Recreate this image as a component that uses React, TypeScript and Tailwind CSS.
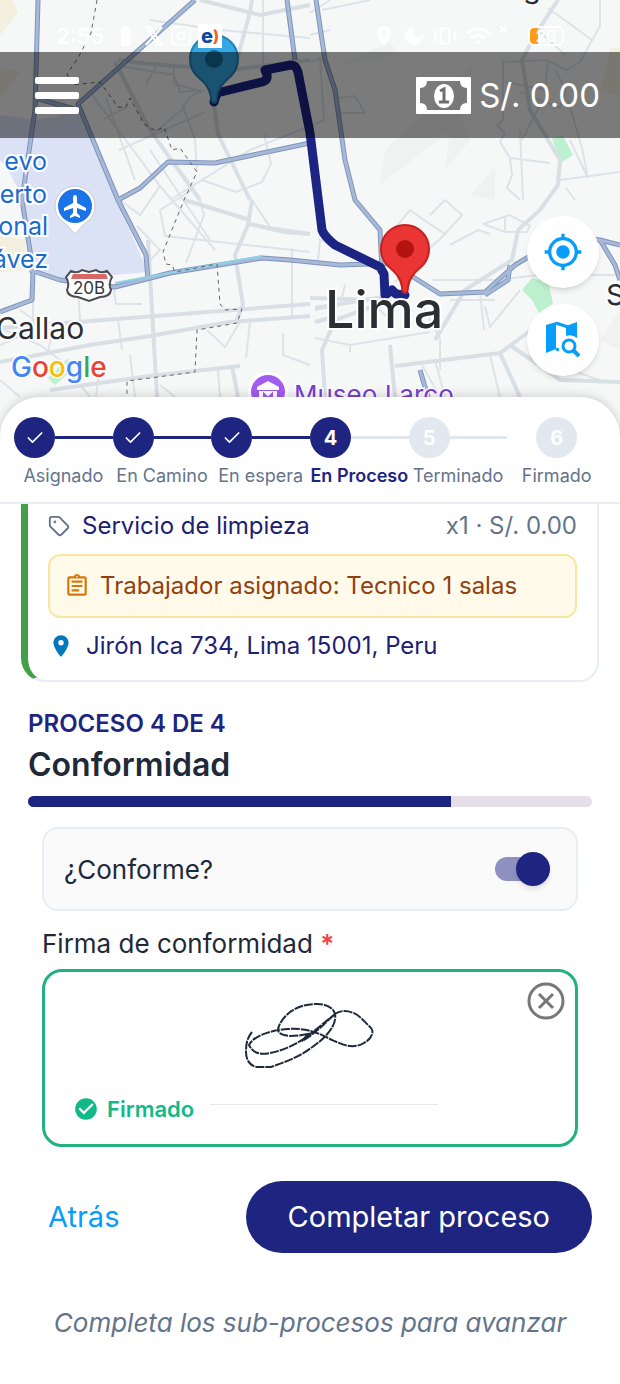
import React, { useState } from "react";
import { Check, Instagram, Tag, Vibrate } from "lucide-react";
import {
  MdBatteryFull,
  MdCheckCircle,
  MdDarkMode,
  MdLocationOn,
  MdMyLocation,
  MdOutlineAssignment,
  MdWifi,
} from "react-icons/md";

type StepState = "done" | "current" | "pending";

interface Step {
  label: string;
  state: StepState;
}

const steps: Step[] = [
  { label: "Asignado", state: "done" },
  { label: "En Camino", state: "done" },
  { label: "En espera", state: "done" },
  { label: "En Proceso", state: "current" },
  { label: "Terminado", state: "pending" },
  { label: "Firmado", state: "pending" },
];

const process = { current: 4, total: 4, name: "Conformidad", progress: 75 };

const thinRoads = [
  "M90 92 L160 186 L215 250 M106 98 L135 180 M119 150 L205 112 M104 119 L127 107 M120 66 L174 75 L180 92 L200 90 M146 84 L156 66",
  "M174 67 V84 L202 91 Q186 96 184 108 L155 132 M182 104 L195 140 L197 172 M263 0 V68 M202 180 L236 192 L262 182 L271 164 L264 134",
  "M150 150 L210 240 M160 186 L140 215 L120 200 M170 200 L250 150 L310 126 M195 188 L160 210 L165 236 L310 252",
  "M200 200 L204 215 L186 263 M137 226 L160 250 L148 263 M113 285 L116 304 L142 304 M78 290 L80 320 M33 300 V330 L0 345",
  "M150 20 L220 30 L310 38 M245 190 L270 227 L310 233 M292 248 V316 M310 365 L283 355 V333 M207 330 L225 347 L240 322 M250 322 L246 358 M118 320 L122 350 M0 328 L40 345 L60 360 L90 397",
  "M310 13 L330 0 M322 10 L370 0 M310 35 L330 30 M310 62 L320 58 L324 120 L310 127 M338 98 L355 96 L365 113 L338 113",
  "M505 62 L547 60 L566 70 L580 62 L600 26 V0 M548 8 L592 40 M503 60 V120 L497 125 L505 133 L500 142 L510 158 L512 175 L507 188 L520 200 M505 82 L545 90 L548 62",
  "M520 92 L560 108 L566 90 L555 70 M510 158 L550 163 M520 130 L523 200 M568 100 L582 148 L588 178 L570 140 M540 105 L522 140 M560 180 L620 172 M566 188 L575 200 M538 30 L565 55",
  "M430 215 L445 200 L462 215 L445 234 L424 220 L410 210 L392 232 M445 234 L395 282 M450 245 L478 230 L490 234 M483 224 L510 215 L530 226 L527 232 L505 232 L483 224 M505 216 V232 M432 280 L495 280 L540 275 L620 275",
  "M315 338 L350 345 L430 332 M350 345 V352 M315 310 L340 305 L345 285 M370 300 L395 325 M440 370 V339 L420 300 M485 306 L490 327 L520 290 M480 292 L484 330 M450 300 L495 300 M422 365 L440 397 M490 355 L500 397 M540 360 L600 380",
  "M130 355 L135 397 M160 385 L175 397 M218 370 L220 397 M100 362 L96 397 M20 310 L52 332 L48 352 M318 260 L320 240 L333 245 M0 380 L20 397 M435 360 L445 397",
];

const mediumRoads = [
  "M118 60 L150 64 L230 70 L310 60",
  "M115 62 L150 130 L200 200",
  "M214 104 L218 134 L250 200",
  "M148 240 L157 397",
  "M0 328 L310 304 M0 362 L90 345 L150 336 L230 322 L310 316 M50 390 L150 376 L240 366",
  "M252 0 L250 12 L237 60 M200 0 L260 15 L310 5",
  "M252 200 L248 225 L235 255 L243 305 L236 322 M232 366 L238 397",
  "M250 224 L285 232 L310 234 M185 200 L250 220",
  "M558 0 L535 35 L522 60 L530 110 L560 160 L558 185 L540 210 L518 230 L512 260 L465 290 L435 340",
  "M390 345 L395 397 M315 308 L395 295 M310 298 L380 300 M315 322 L330 318 M325 397 L322 350 L335 320 L390 300",
  "M395 366 L500 353 L545 320 M500 353 L520 397 M510 345 L560 380 L620 382",
];

const highways = [
  "M38 0 L35 110 L22 200 L33 270 L32 300 L0 312",
  "M195 0 L78 104 L118 200 L146 255 L148 280",
  "M35 98 L78 110 M118 200 L140 188 L168 162 L215 163 L310 143",
  "M30 270 L60 280 L115 287 L170 273 L262 258 L290 260 L340 265 L400 263",
  "M287 0 L295 60 M316 0 L325 60 L335 90 L345 160 L355 200 L380 230 L382 270",
  "M410 275 L440 294 L485 292 L515 265 L540 250 L560 235 L600 240 L620 245 M600 240 L615 265 L620 280 M485 295 L508 280 L510 265",
  "M420 370 L428 397",
];

function MapPin({ x, y, color, dot, edge }: { x: number; y: number; color: string; dot: string; edge: string }) {
  return (
    <g transform={`translate(${x} ${y})`}>
      <path
        d="M0 44C-2 44-3 42-3 38C-4 29-10 23-17 17A24 24 0 1 1 17 17C10 23 4 29 3 38C3 42 2 44 0 44Z"
        fill={color}
        stroke={edge}
        strokeWidth="2"
      />
      <circle r="9" fill={dot} />
    </g>
  );
}

function CityMap() {
  return (
    <svg
      className="absolute inset-0 h-full w-full"
      viewBox="0 0 620 440"
      preserveAspectRatio="xMidYMin slice"
      fontFamily="Inter, sans-serif"
      aria-hidden="true"
    >
      <rect width="620" height="440" fill="#f6f7f7" />
      <path d="M0 0 H12 L18 12 L0 35 Z M50 102 L70 132 L80 128 L60 95 Z M0 235 L25 240 L28 270 L0 272 Z" fill="#f3efdf" />
      <path d="M0 68 L20 72 L0 98 Z M610 48 H620 V95 L600 92 Z" fill="#f3efdf" />
      <path d="M0 115 L36 120 L78 112 L148 272 L60 280 L30 268 L24 200 L8 170 L0 160 Z" fill="#dbe2f6" />
      <path d="M385 150 L450 90 L475 60 L460 115 L470 140 L445 170 L450 130 L380 185 Z M470 195 L495 168 V200 Z M340 65 L390 42 L400 55 Z M600 340 L620 310 V350 Z" fill="#f0f1f1" />
      <path d="M552 138 L563 136 L573 155 L560 163 Z M522 290 L532 278 L548 282 L553 303 L540 315 L532 300 Z M48 378 L68 358 L70 372 L55 385 Z" fill="#bdf0cf" />

      <g fill="none">
        {thinRoads.map((d) => (
          <path key={d} d={d} stroke="#dde3e9" strokeWidth="2" />
        ))}
        {mediumRoads.map((d) => (
          <path key={d} d={d} stroke="#d8dfe5" strokeWidth="4" />
        ))}
      </g>
      <g fill="none" strokeLinejoin="round">
        {highways.map((d) => (
          <path key={d} d={d} stroke="#8194bb" strokeWidth="5" />
        ))}
        {highways.map((d) => (
          <path key={d} d={d} stroke="#a6b9d9" strokeWidth="3" />
        ))}
        <path d="M115 283 L262 256" stroke="#8cd3e6" strokeWidth="2" />
        <path
          d="M97 0 L91 33 L78 58 L67 74 L72 85 L100 82 L118 107 L126 107 L130 98 L144 124 L156 131 L164 127 L172 150 L180 148 L197 172 L184 200 L163 252 L166 264 L172 265 L175 272 L217 264 L220 304 L225 310 L242 309 L237 323 L197 330 L195 372 L127 381 V397"
          stroke="#62676d"
          strokeDasharray="4 4"
        />
      </g>

      <path
        d="M214 102 L217 93 L262 82 Q268 80 267 75 L265 70 L291 65 Q296 65 298 72 L310 133 L322 230 Q324 236 335 245 L380 267 L384 274 L385 295 L392 290 L396 294 L405 295"
        fill="none"
        stroke="#1c2484"
        strokeWidth="9"
        strokeLinejoin="round"
        strokeLinecap="round"
      />

      <g fill="#1a6bd0" stroke="#fff" strokeWidth="4" paintOrder="stroke" fontSize="25" textAnchor="end">
        <text x="47" y="170">evo</text>
        <text x="47" y="203">erto</text>
        <text x="48" y="235">onal</text>
        <text x="48" y="268">ávez</text>
      </g>
      <path d="M75 234 L66 224 A20 20 0 1 1 84 224 Z" fill="#fff" stroke="#c9ccd2" />
      <circle cx="75" cy="206" r="17" fill="#1a73e8" />
      <path d="M75 195 Q77 195 77 198 V203 L86 208 V211 L77 208 V213 L80 216 V218 L75 216 L70 218 V216 L73 213 V208 L64 211 V208 L73 203 V198 Q73 195 75 195 Z" fill="#fff" />

      <path
        d="M71 271 Q77 274 82 270 L89 272 L96 270 Q101 274 107 271 L112 277 Q108 284 111 290 Q110 297 100 297 L89 301 L78 297 Q68 297 67 290 Q70 284 66 277 Z"
        fill="#fff"
        stroke="#4a4d51"
        strokeWidth="2"
      />
      <path d="M73 274 L106 274 L108 279 H71 Z" fill="#d86767" />
      <text x="89" y="294" fontSize="17" textAnchor="middle" fill="#33373c">20B</text>

      <g fill="#2b2e33" stroke="#fff" strokeWidth="4" paintOrder="stroke" strokeLinejoin="round">
        <text x="-4" y="339" fontSize="30">Callao</text>
        <text x="325" y="328" fontSize="52" fontWeight="500">Lima</text>
        <text x="606" y="305" fontSize="29">S</text>
        <text x="523" y="-2" fontSize="29">g</text>
      </g>
      <text x="11" y="377" fontSize="28" fontWeight="500" stroke="#fff" strokeWidth="3" paintOrder="stroke">
        <tspan fill="#4285f4">G</tspan>
        <tspan fill="#ea4335">o</tspan>
        <tspan fill="#fbbc05">o</tspan>
        <tspan fill="#4285f4">g</tspan>
        <tspan fill="#34a853">l</tspan>
        <tspan fill="#ea4335">e</tspan>
      </text>

      <circle cx="268" cy="392" r="20" fill="#fff" />
      <circle cx="268" cy="392" r="17" fill="#a35cf0" />
      <path d="M257 387 L268 381 L279 387 V390 H257 Z M259 391 H277 V402 H259 Z" fill="#fff" />
      <path d="M264 400 V394 L268 398 L272 394 V400" fill="none" stroke="#a35cf0" strokeWidth="2" />
      <text x="294" y="404" fontSize="26" fill="#7a3fd0" stroke="#fff" strokeWidth="3" paintOrder="stroke">
        Museo Larco
      </text>

      <MapPin x={214} y={59} color="#35a7e5" dot="#136a9a" edge="#2383b5" />
      <MapPin x={405} y={249} color="#ea3535" dot="#b31412" edge="#c5221f" />
    </svg>
  );
}

function StatusBar() {
  return (
    <div className="flex h-[52px] items-center justify-between pt-5 pr-14 pl-14 text-white">
      <div className="flex items-center gap-1.5">
        <span className="w-[52px] text-[22px] font-semibold">2:55</span>
        <MdBatteryFull size={24} />
        <svg width="20" height="20" viewBox="0 0 20 20" fill="none" stroke="currentColor" strokeWidth="2" aria-hidden="true">
          <path d="M2 1 H6 L18 19 H14 Z M18 1 L2 19" />
        </svg>
        <Instagram size={22} />
        <span className="flex h-6 w-6 items-center justify-center bg-white text-[20px] leading-6 font-extrabold text-[#1147a6]">
          e<span className="text-[16px] text-[#f1622a]">)</span>
        </span>
      </div>
      <div className="flex items-center gap-1.5">
        <MdLocationOn size={24} />
        <MdDarkMode size={24} />
        <Vibrate size={26} />
        <MdWifi size={28} />
        <span className="w-6 self-start text-[16px] leading-3 font-bold">×</span>
        <span className="flex h-5 w-9 items-center justify-center rounded-md border-2 border-white bg-linear-to-r from-[#ff9c1a] from-25% to-transparent to-25% text-[16px] font-semibold">
          20
        </span>
      </div>
    </div>
  );
}

function AppBar() {
  return (
    <header className="flex h-[86px] items-center justify-between bg-black/50 pr-5 pl-[35px] text-white">
      <button type="button" aria-label="Abrir menú" className="flex w-11 flex-col gap-2">
        <span className="h-[7px] rounded-xs bg-white" />
        <span className="h-[7px] rounded-xs bg-white" />
        <span className="h-[7px] rounded-xs bg-white" />
      </button>
      <div className="flex items-center gap-2">
        <svg width="55" height="37" viewBox="0 0 55 37" aria-hidden="true">
          <path
            d="M1 0 H54 Q55 0 55 1 V36 Q55 37 54 37 H1 Q0 37 0 36 V1 Q0 0 1 0 Z M11 4 Q11 11 4 11 V26 Q11 26 11 33 H44 Q44 26 51 26 V11 Q44 11 44 4 Z"
            fill="#fff"
            fillRule="evenodd"
          />
          <ellipse cx="28" cy="19" rx="10" ry="12" fill="#fff" />
          <path d="M24 14 L28 12 V25 M23 25 H33" fill="none" stroke="#6f6f6f" strokeWidth="3" />
        </svg>
        <span className="text-[33px] leading-10">S/. 0.00</span>
      </div>
    </header>
  );
}

function MapActions() {
  const buttonClass =
    "flex h-[72px] w-[72px] items-center justify-center rounded-full bg-white text-[#069dfb] shadow-md";
  return (
    <div className="flex flex-col items-end gap-4 pt-[78px] pr-[21px]">
      <button type="button" aria-label="Mi ubicación" className={buttonClass}>
        <MdMyLocation size={40} />
      </button>
      <button type="button" aria-label="Buscar en el mapa" className={buttonClass}>
        <svg width="38" height="40" viewBox="0 0 38 40" fill="none" aria-hidden="true">
          <path d="M2 5 L12 2 V29 L2 33 Z" fill="currentColor" />
          <path d="M12 3 L24 7 M12 29 L15 30" stroke="currentColor" strokeWidth="3" />
          <path d="M22 6 L33 2 V18 Q28 14 22 16 Z" fill="currentColor" />
          <circle cx="25" cy="26" r="6" stroke="currentColor" strokeWidth="3" />
          <path d="M29 30 L35 36" stroke="currentColor" strokeWidth="4" />
        </svg>
      </button>
    </div>
  );
}

function Stepper() {
  return (
    <ol className="flex border-b-2 border-[#e8ecf4] px-3.5 pt-5 pb-4">
      {steps.map((step, idx) => {
        const last = idx === steps.length - 1;
        const active = step.state !== "pending";
        return (
          <li key={step.label} className="flex min-w-0 flex-1 flex-col gap-2">
            <div className={`flex items-center ${last ? "justify-center" : ""}`}>
              <span
                className={`flex h-[41px] w-[41px] shrink-0 items-center justify-center rounded-full text-[20px] font-bold text-white ${
                  active ? "bg-[#1e2580]" : "bg-[#e2e8f0]"
                }`}
              >
                {step.state === "done" ? <Check size={20} strokeWidth={2} /> : idx + 1}
              </span>
              {!last && (
                <span className={`h-[3px] flex-1 ${step.state === "done" ? "bg-[#1e2580]" : "bg-[#e2e8f0]"}`} />
              )}
            </div>
            <span
              className={`flex justify-center text-[18px] leading-5 whitespace-nowrap ${
                step.state === "current" ? "font-semibold text-[#1e2580]" : "text-[#64748b]"
              }`}
            >
              {step.label}
            </span>
          </li>
        );
      })}
    </ol>
  );
}

function ServiceCard() {
  return (
    <section className="mr-[21px] ml-[21px] rounded-br-[20px] rounded-bl-[24px] border-2 border-t-0 border-l-[7px] border-[#e8ecf4] border-l-[#43a047] pt-1.5 pr-5 pb-[18px] pl-5 text-[24px] leading-8">
      <div className="flex items-center justify-between">
        <div className="flex items-center gap-3 text-[#1e2070]">
          <Tag size={22} className="text-[#64748b]" />
          <span>Servicio de limpieza</span>
        </div>
        <span className="text-[#64748b]">x1 · S/. 0.00</span>
      </div>
      <div className="mt-3 flex h-16 items-center gap-2.5 rounded-xl border-2 border-[#f7e7a0] bg-[#fffaea] px-3.5 text-[#92400e]">
        <MdOutlineAssignment size={26} className="text-[#d97706]" />
        <span>Trabajador asignado: Tecnico 1 salas</span>
      </div>
      <div className="mt-3 flex items-center gap-3 text-[#1e2070]">
        <MdLocationOn size={26} className="text-[#0277bd]" />
        <span>Jirón Ica 734, Lima 15001, Peru</span>
      </div>
    </section>
  );
}

function SignatureBox() {
  const [signed, setSigned] = useState(true);

  return (
    <div className="relative mt-2 h-[178px] rounded-[20px] border-[3px] border-[#22b183] px-7 pt-7">
      <button
        type="button"
        aria-label="Borrar firma"
        onClick={() => setSigned(false)}
        className="absolute top-2.5 right-2.5 text-[#777777]"
      >
        <svg width="38" height="38" viewBox="0 0 38 38" fill="none" stroke="currentColor" strokeWidth="3" aria-hidden="true">
          <circle cx="19" cy="19" r="17" />
          <path d="M12 12 L26 26 M26 12 L12 26" />
        </svg>
      </button>
      <div className="flex h-[72px] justify-center">
        {signed && (
          <svg width="134" height="72" viewBox="0 0 134 72" fill="none" stroke="#1e293b" strokeWidth="2" aria-label="Firma">
            <path
              d="M9 32 C4 38 3 44 3 52 C3 62 9 67 15 67 H28 C42 62 56 57 68 48 C84 37 94 25 92 14 C90 7 83 4 74 4 C52 4 40 16 36 26 C33 33 38 35 47 36 C54 36 60 35 65 34 L59 41 C72 34 82 23 92 14 C100 8 112 12 118 18 L128 28 C132 33 127 40 121 43 C109 50 98 44 87 39 C72 31 61 28 45 29 C28 30 10 36 6 45 C10 53 16 55 27 53 C39 51 54 44 65 36 L92 14"
              strokeDasharray="9 1"
            />
          </svg>
        )}
      </div>
      {signed && (
        <div className="mt-6 flex items-center gap-2 text-[#12b886]">
          <MdCheckCircle size={26} />
          <span className="text-[22px] leading-6 font-semibold">Firmado</span>
          <span className="mt-2 ml-2 h-px w-[228px] self-start bg-[#e8e8e8]" />
        </div>
      )}
    </div>
  );
}

export default function App() {
  const [accepted, setAccepted] = useState(true);

  return (
    <div className="flex min-h-screen flex-col bg-white font-['Inter',sans-serif] text-[#1f2937]">
      <div className="relative h-[437px] shrink-0 overflow-hidden">
        <CityMap />
        <div className="relative">
          <StatusBar />
          <AppBar />
          <MapActions />
        </div>
      </div>

      <main className="relative -mt-10 flex-1 rounded-t-[40px] bg-white shadow-[0_-2px_10px_rgba(0,0,0,0.15)]">
        <Stepper />
        <ServiceCard />

        <section className="px-7 pt-6">
          <p className="text-[24px] leading-9 font-semibold text-[#1e2580]">
            PROCESO {process.current} DE {process.total}
          </p>
          <h1 className="text-[32px] leading-[46px] font-semibold">{process.name}</h1>
          <div
            role="progressbar"
            aria-label="Avance del proceso"
            aria-valuenow={process.progress}
            className="mt-2 h-[11px] overflow-hidden rounded-full bg-[#e6deeb]"
          >
            <div className="h-full bg-[#1e2580]" style={{ width: `${process.progress}%` }} />
          </div>

          <div className="px-3.5 pt-5">
            <label className="flex h-[84px] items-center justify-between rounded-2xl border-2 border-[#e8ecf4] bg-[#fafafa] pr-[26px] pl-5 text-[26px]">
              ¿Conforme?
              <input
                type="checkbox"
                role="switch"
                checked={accepted}
                onChange={(e) => setAccepted(e.target.checked)}
                className="peer sr-only"
              />
              <span className="flex h-6 w-[55px] items-center rounded-full bg-[#cbd5e1] peer-checked:justify-end peer-checked:bg-[#8e91bf]">
                <span className="h-[34px] w-[34px] rounded-full bg-[#1e2580] shadow-md" />
              </span>
            </label>

            <p className="mt-4 text-[26px] leading-[34px]">
              Firma de conformidad <span className="font-semibold text-[#ef4444]">*</span>
            </p>
            <SignatureBox />
          </div>
        </section>

        <div className="flex items-center justify-between pt-[34px] pr-7 pl-12 text-[29px]">
          <button type="button" className="h-[72px] text-[#069dfb]">
            Atrás
          </button>
          <button type="button" className="h-[72px] rounded-full bg-[#1e2580] px-[42px] text-white">
            Completar proceso
          </button>
        </div>

        <p className="px-7 pt-[52px] pb-10 text-center text-[26px] leading-9 text-[#64748b] italic">
          Completa los sub-procesos para avanzar
        </p>
      </main>
    </div>
  );
}
